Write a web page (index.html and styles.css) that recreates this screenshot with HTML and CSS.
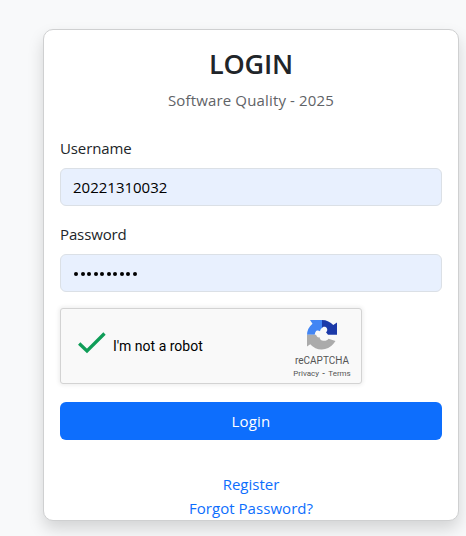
FILE: index.html
```html
<!DOCTYPE html>
<html lang="en">
<head>
<meta charset="utf-8">
<title>Login</title>
<link rel="stylesheet" href="styles.css">
</head>
<body>
<main class="card">
  <header class="head">
    <h1 class="title">LOGIN</h1>
    <p class="subtitle">Software Quality - 2025</p>
  </header>
  <form class="form">
    <label class="label" for="user">Username</label>
    <input class="input" id="user" type="text" value="20221310032">
    <label class="label label-password" for="pass">Password</label>
    <div class="input dots" id="pass" role="textbox" aria-label="Password"><i></i><i></i><i></i><i></i><i></i><i></i><i></i><i></i><i></i><i></i></div>
    <div class="captcha">
      <svg class="check" viewBox="0 0 30 24" width="30" height="24"><path d="M2.200 12.500 10 20 27.500 2.500" fill="none" stroke="#0f9d58" stroke-width="3.300"/></svg>
      <span class="robot">I'm not a robot</span>
      <div class="brand">
        <svg class="logo" viewBox="0 0 64 64" width="32" height="32">
          <path fill="#1c3aa9" d="M32 2c9 0 17 4 22.500 10L62 7v24.500H44l-4-5c2.500-2 3.500-5 1.500-8.500C39 14.500 34 15 32 18z"/>
          <path fill="#4285f4" d="M32 2H8l5 7.500A30 30 0 0 0 2 31.500h15.500c.5-5 2-7.500 4.500-8.500 2-.5 4 0 6 1.500.5-3 2-5.500 4-6.500z"/>
          <path fill="#ababab" d="M2 31.500V55l6.500-4.500A30 30 0 0 0 54.500 50L59 44l-14-4.500c-2.500 3.500-6 4.500-10 4-5-.5-7.500-3-8-7-3 1-5.500-1-7-5z"/>
        </svg>
        <span class="brand-name">reCAPTCHA</span>
        <span class="terms">Privacy<b>-</b>Terms</span>
      </div>
    </div>
    <button class="button" type="button">Login</button>
  </form>
  <nav class="links">
    <a class="register" href="#">Register</a>
    <a class="forgot" href="#">Forgot Password?</a>
  </nav>
</main>
</body>
</html>
```
FILE: styles.css
```css
* { box-sizing: border-box; }
body {
  margin: 0;
  padding: 29px 7px 0 43px;
  height: 536px;
  overflow: hidden;
  background: #f8f9fa;
  color: #212529;
  font: 15px/24px "Open Sans", "Noto Sans", sans-serif;
}
.card {
  height: 492px;
  padding: 0 16px;
  background: #fff;
  border: 1px solid #cfd0d1;
  border-radius: 10px;
  box-shadow: 0 8px 16px rgba(0, 0, 0, .15);
}
.head { padding-top: 17px; text-align: center; }
.title { margin: 0; font-size: 27px; font-weight: 550; line-height: 34px; letter-spacing: -.2px; }
.subtitle { margin: 7px 0 0; color: #5f6367; letter-spacing: .15px; }
.form { display: flex; flex-direction: column; padding-top: 24px; }
.label { margin-bottom: 8px; letter-spacing: -.12px; }
.label-password { margin-top: 16px; }
.input {
  width: 100%;
  height: 38px;
  padding: 0 12px;
  background: #e8f0fe;
  border: 1px solid #dbe0e6;
  border-radius: 6px;
  color: #000;
  font: inherit;
}
.dots { display: flex; align-items: center; gap: 2.5px; padding: 2px 13px 0; }
.dots i { width: 4px; height: 4px; border-radius: 50%; background: #000; }
.captcha {
  display: flex;
  width: 302px;
  height: 76px;
  margin: 16px 0 18px;
  background: #f9f9f9;
  border: 1px solid #d3d3d3;
  border-radius: 3px;
  box-shadow: 0 0 4px 1px rgba(0, 0, 0, .08);
  font-family: Roboto, sans-serif;
}
.check { margin: 22px 0 0 16px; }
.robot { margin: 25px 0 0 6px; font-size: 14px; color: #000; }
.brand { display: flex; flex-direction: column; align-items: center; width: 70px; margin: 10px 4px 0 auto; color: #555; }
.brand-name { height: 12px; margin-top: 3px; font-size: 10px; line-height: 14px; }
.terms { display: flex; gap: 3px; margin-top: 2px; font-size: 8px; line-height: 12px; }
.button { height: 38px; padding: 0; border: 0; border-radius: 6px; background: #0d6efd; color: #fff; font: inherit; letter-spacing: .2px; }
.links { display: flex; flex-direction: column; align-items: center; padding-top: 32px; }
.links a { color: #0d6efd; text-decoration: none; }
.forgot { letter-spacing: .05px; }
```
